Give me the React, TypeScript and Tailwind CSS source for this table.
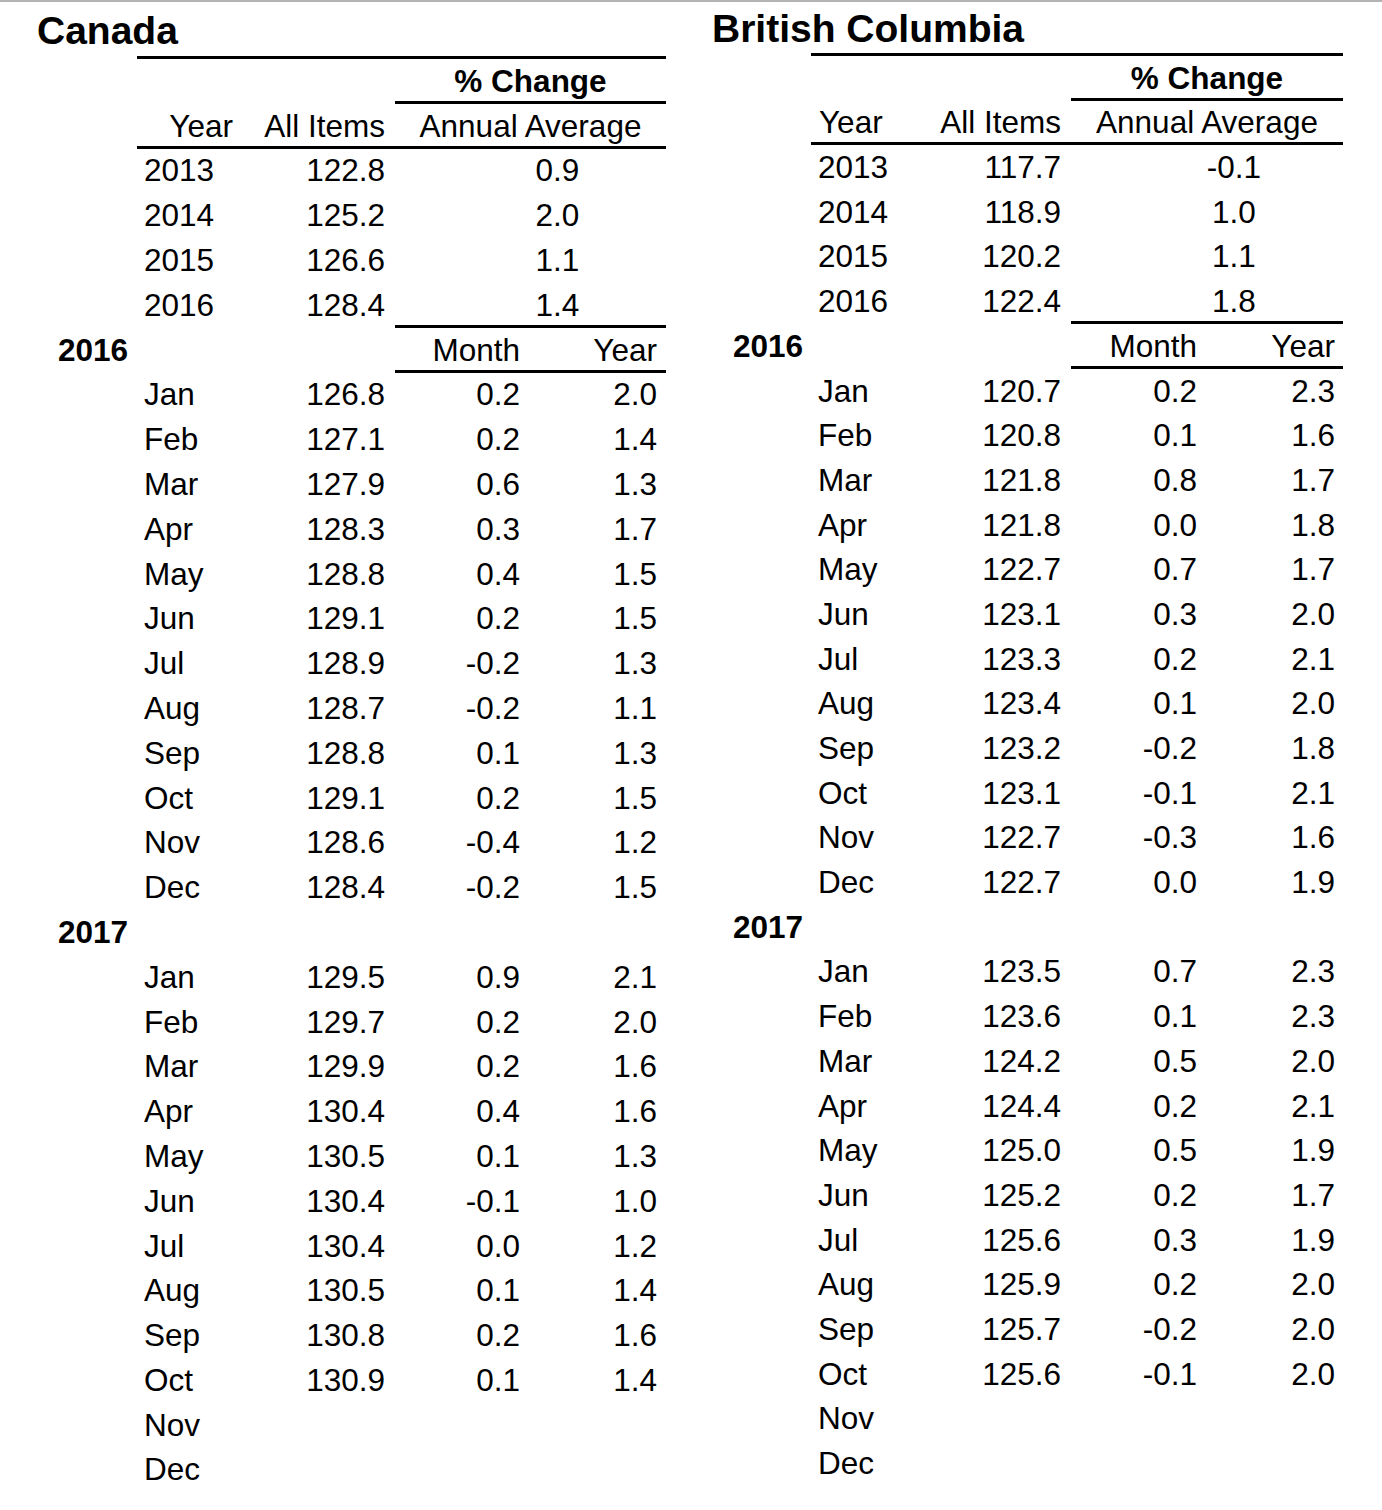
import React from "react";

type Row =
  | { kind: "pct" }
  | { kind: "head" }
  | { kind: "annual"; y: string; all: string; avg: string; top?: boolean }
  | { kind: "label"; y: string; sub?: boolean }
  | { kind: "month"; m: string; all?: string; mo?: string; yr?: string; top?: boolean };

const FONT = { fontFamily: '"Liberation Sans", Arial, sans-serif' };

const months = ["Jan", "Feb", "Mar", "Apr", "May", "Jun", "Jul", "Aug", "Sep", "Oct", "Nov", "Dec"];

function build(
  annual: [string, string, string][],
  m16: [string, string, string][],
  m17: [string, string, string][]
): Row[] {
  const rows: Row[] = [{ kind: "pct" }, { kind: "head" }];
  annual.forEach((a, i) => rows.push({ kind: "annual", y: a[0], all: a[1], avg: a[2], top: i === 0 }));
  rows.push({ kind: "label", y: "2016", sub: true });
  months.forEach((m, i) =>
    rows.push({ kind: "month", m, all: m16[i]?.[0], mo: m16[i]?.[1], yr: m16[i]?.[2], top: i === 0 })
  );
  rows.push({ kind: "label", y: "2017" });
  months.forEach((m, i) => rows.push({ kind: "month", m, all: m17[i]?.[0], mo: m17[i]?.[1], yr: m17[i]?.[2] }));
  return rows;
}

const canadaRows = build(
  [
    ["2013", "122.8", "0.9"],
    ["2014", "125.2", "2.0"],
    ["2015", "126.6", "1.1"],
    ["2016", "128.4", "1.4"],
  ],
  [
    ["126.8", "0.2", "2.0"],
    ["127.1", "0.2", "1.4"],
    ["127.9", "0.6", "1.3"],
    ["128.3", "0.3", "1.7"],
    ["128.8", "0.4", "1.5"],
    ["129.1", "0.2", "1.5"],
    ["128.9", "-0.2", "1.3"],
    ["128.7", "-0.2", "1.1"],
    ["128.8", "0.1", "1.3"],
    ["129.1", "0.2", "1.5"],
    ["128.6", "-0.4", "1.2"],
    ["128.4", "-0.2", "1.5"],
  ],
  [
    ["129.5", "0.9", "2.1"],
    ["129.7", "0.2", "2.0"],
    ["129.9", "0.2", "1.6"],
    ["130.4", "0.4", "1.6"],
    ["130.5", "0.1", "1.3"],
    ["130.4", "-0.1", "1.0"],
    ["130.4", "0.0", "1.2"],
    ["130.5", "0.1", "1.4"],
    ["130.8", "0.2", "1.6"],
    ["130.9", "0.1", "1.4"],
  ]
);

const bcRows = build(
  [
    ["2013", "117.7", "-0.1"],
    ["2014", "118.9", "1.0"],
    ["2015", "120.2", "1.1"],
    ["2016", "122.4", "1.8"],
  ],
  [
    ["120.7", "0.2", "2.3"],
    ["120.8", "0.1", "1.6"],
    ["121.8", "0.8", "1.7"],
    ["121.8", "0.0", "1.8"],
    ["122.7", "0.7", "1.7"],
    ["123.1", "0.3", "2.0"],
    ["123.3", "0.2", "2.1"],
    ["123.4", "0.1", "2.0"],
    ["123.2", "-0.2", "1.8"],
    ["123.1", "-0.1", "2.1"],
    ["122.7", "-0.3", "1.6"],
    ["122.7", "0.0", "1.9"],
  ],
  [
    ["123.5", "0.7", "2.3"],
    ["123.6", "0.1", "2.3"],
    ["124.2", "0.5", "2.0"],
    ["124.4", "0.2", "2.1"],
    ["125.0", "0.5", "1.9"],
    ["125.2", "0.2", "1.7"],
    ["125.6", "0.3", "1.9"],
    ["125.9", "0.2", "2.0"],
    ["125.7", "-0.2", "2.0"],
    ["125.6", "-0.1", "2.0"],
  ]
);

type PanelProps = {
  title: string;
  rows: Row[];
  titleClass: string;
  rowClass: string;
  gutterClass: string;
  c1: string;
  c2: string;
  c3: string;
  c4: string;
  merged: string;
  yearHeadRight: boolean;
  c4pr: string;
};

function Panel(p: PanelProps) {
  const cell = "flex items-center border-t-[3px] h-full pt-[3px]";
  const on = "border-black";
  const off = "border-transparent";
  return (
    <div className="flex flex-col">
      <div className={"text-[39px] font-bold leading-[45px] " + p.titleClass}>{p.title}</div>
      {p.rows.map((r, i) => {
        let gutter: React.ReactNode = null;
        let a: React.ReactNode = null;
        let b: React.ReactNode = null;
        let c: React.ReactNode = null;
        let d: React.ReactNode = null;
        let topAll = false;
        let topRight = false;
        let merged: React.ReactNode = null;
        if (r.kind === "pct") {
          topAll = true;
          topRight = true;
          merged = <span className="w-full text-center font-bold">% Change</span>;
        } else if (r.kind === "head") {
          topRight = true;
          a = (
            <span className={p.yearHeadRight ? "w-full text-right pr-[14px]" : "w-full text-left pl-[8px]"}>
              Year
            </span>
          );
          b = <span className="w-full text-right pr-[10px]">All Items</span>;
          merged = <span className="w-full text-center">Annual Average</span>;
        } else if (r.kind === "annual") {
          topAll = !!r.top;
          topRight = !!r.top;
          a = <span className="pl-[7px]">{r.y}</span>;
          b = <span className="w-full text-right pr-[10px]">{r.all}</span>;
          merged = <span className="w-full text-center pl-[54px]">{r.avg}</span>;
        } else if (r.kind === "label") {
          gutter = <span className="font-bold">{r.y}</span>;
          if (r.sub) {
            topRight = true;
            c = <span className="w-full text-right pr-[10px]">Month</span>;
            d = <span className={"w-full text-right " + p.c4pr}>Year</span>;
          }
        } else {
          topRight = !!r.top;
          a = <span className="pl-[7px]">{r.m}</span>;
          b = <span className="w-full text-right pr-[10px]">{r.all ?? ""}</span>;
          c = <span className="w-full text-right pr-[10px]">{r.mo ?? ""}</span>;
          d = <span className={"w-full text-right " + p.c4pr}>{r.yr ?? ""}</span>;
        }
        return (
          <div key={i} className={"flex " + p.rowClass}>
            <div className={cell + " pl-[21px] " + off + " " + p.gutterClass}>{gutter}</div>
            <div className={cell + " " + p.c1 + " " + (topAll ? on : off)}>{a}</div>
            <div className={cell + " " + p.c2 + " " + (topAll ? on : off)}>{b}</div>
            {merged !== null ? (
              <div className={cell + " " + p.merged + " " + (topRight ? on : off)}>{merged}</div>
            ) : (
              <>
                <div className={cell + " " + p.c3 + " " + (topRight ? on : off)}>{c}</div>
                <div className={cell + " " + p.c4 + " " + (topRight ? on : off)}>{d}</div>
              </>
            )}
          </div>
        );
      })}
    </div>
  );
}

export default function App() {
  return (
    <div className="w-[1382px] h-[1510px] bg-white text-black overflow-hidden" style={FONT}>
      <div className="h-[2px] bg-[#b3b3b3]" />
      <div className="flex pl-[37px] text-[31.5px] leading-normal">
        <Panel
          title="Canada"
          rows={canadaRows}
          titleClass="h-[54px] pt-[6px]"
          rowClass="h-[44.8px]"
          gutterClass="w-[100px]"
          c1="w-[110px]"
          c2="w-[148px]"
          c3="w-[135px]"
          c4="w-[136px]"
          merged="w-[271px]"
          yearHeadRight={true}
          c4pr="pr-[9px]"
        />
        <div className="w-[46px] shrink-0" />
        <Panel
          title="British Columbia"
          rows={bcRows}
          titleClass="h-[51px] pt-[4px]"
          rowClass="h-[44.7px]"
          gutterClass="w-[99px]"
          c1="w-[114px]"
          c2="w-[146px]"
          c3="w-[136px]"
          c4="w-[136px]"
          merged="w-[272px]"
          yearHeadRight={false}
          c4pr="pr-[8px]"
        />
      </div>
    </div>
  );
}
